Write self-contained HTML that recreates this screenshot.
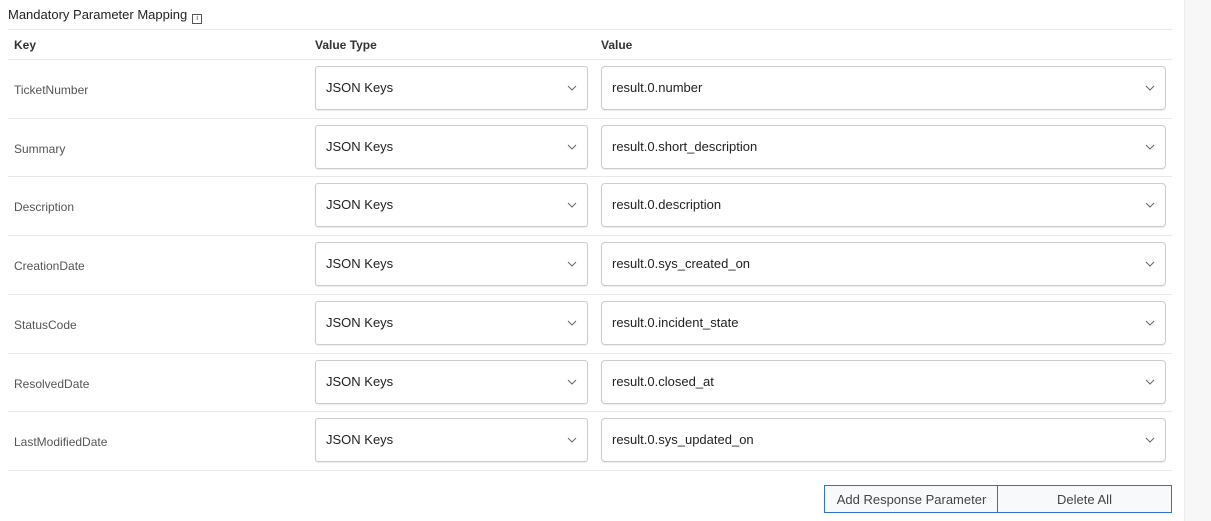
<!DOCTYPE html><html><head><style>
body{margin:0;width:1211px;height:521px;background:#fff;font-family:"Liberation Sans",sans-serif;position:relative;overflow:hidden}
.strip{position:absolute;left:1184px;top:0;width:27px;height:521px;background:#f7f7f7;border-left:1px solid #ececec}
.title{position:absolute;left:8px;top:7px;font-size:13px;color:#222}
.info{display:inline-block;width:8px;height:8px;border:1px solid #555;margin-left:5px;vertical-align:-1px;font-size:7px;line-height:8px;text-align:center}
.hl{position:absolute;left:8px;width:1164px;height:1px;background:#e8e8e8}
.h{position:absolute;top:38px;font-size:12px;font-weight:bold;color:#333}
.k{position:absolute;left:14px;font-size:12px;color:#555}
.sel{position:absolute;height:44px;border:1px solid #ccc;border-radius:3px;box-sizing:border-box;font-size:13px;color:#222;padding-left:10px;line-height:42px;box-shadow:0 1px 1px rgba(0,0,0,.08)}
.sel svg{position:absolute;right:10px;top:18px}
.btn{position:absolute;top:485px;height:28px;border:1px solid #2f72d6;background:#f7f9fb;font-size:13px;color:#444;text-align:center;line-height:27px;box-sizing:border-box}
</style></head><body>
<div class="strip"></div>
<div class="title">Mandatory Parameter Mapping<span class="info">i</span></div>
<div class="hl" style="top:29px"></div>
<div class="h" style="left:14px">Key</div><div class="h" style="left:315px">Value Type</div><div class="h" style="left:601px">Value</div>
<div class="hl" style="top:59px"></div>
<div id="rows"></div>
<script>
var k=["TicketNumber","Summary","Description","CreationDate","StatusCode","ResolvedDate","LastModifiedDate"],v=["result.0.number","result.0.short_description","result.0.description","result.0.sys_created_on","result.0.incident_state","result.0.closed_at","result.0.sys_updated_on"],h="";
var ch='<svg width="10" height="6" viewBox="0 0 10 6"><path d="M1 1l4 4 4-4" fill="none" stroke="#666" stroke-width="1"/></svg>';
for(var i=0;i<7;i++){var t=59+i*58.7;
h+='<div class="k" style="top:'+(t+24)+'px">'+k[i]+'</div><div class="sel" style="left:315px;width:273px;top:'+(t+7)+'px">JSON Keys'+ch+'</div><div class="sel" style="left:601px;width:565px;top:'+(t+7)+'px;border-radius:4px">'+v[i]+ch+'</div><div class="hl" style="top:'+Math.round(t+58.7)+'px"></div>';}
document.getElementById("rows").innerHTML=h;
</script>
<div class="btn" style="left:824px;width:175px">Add Response Parameter</div>
<div class="btn" style="left:997px;width:175px">Delete All</div>
</body></html>
